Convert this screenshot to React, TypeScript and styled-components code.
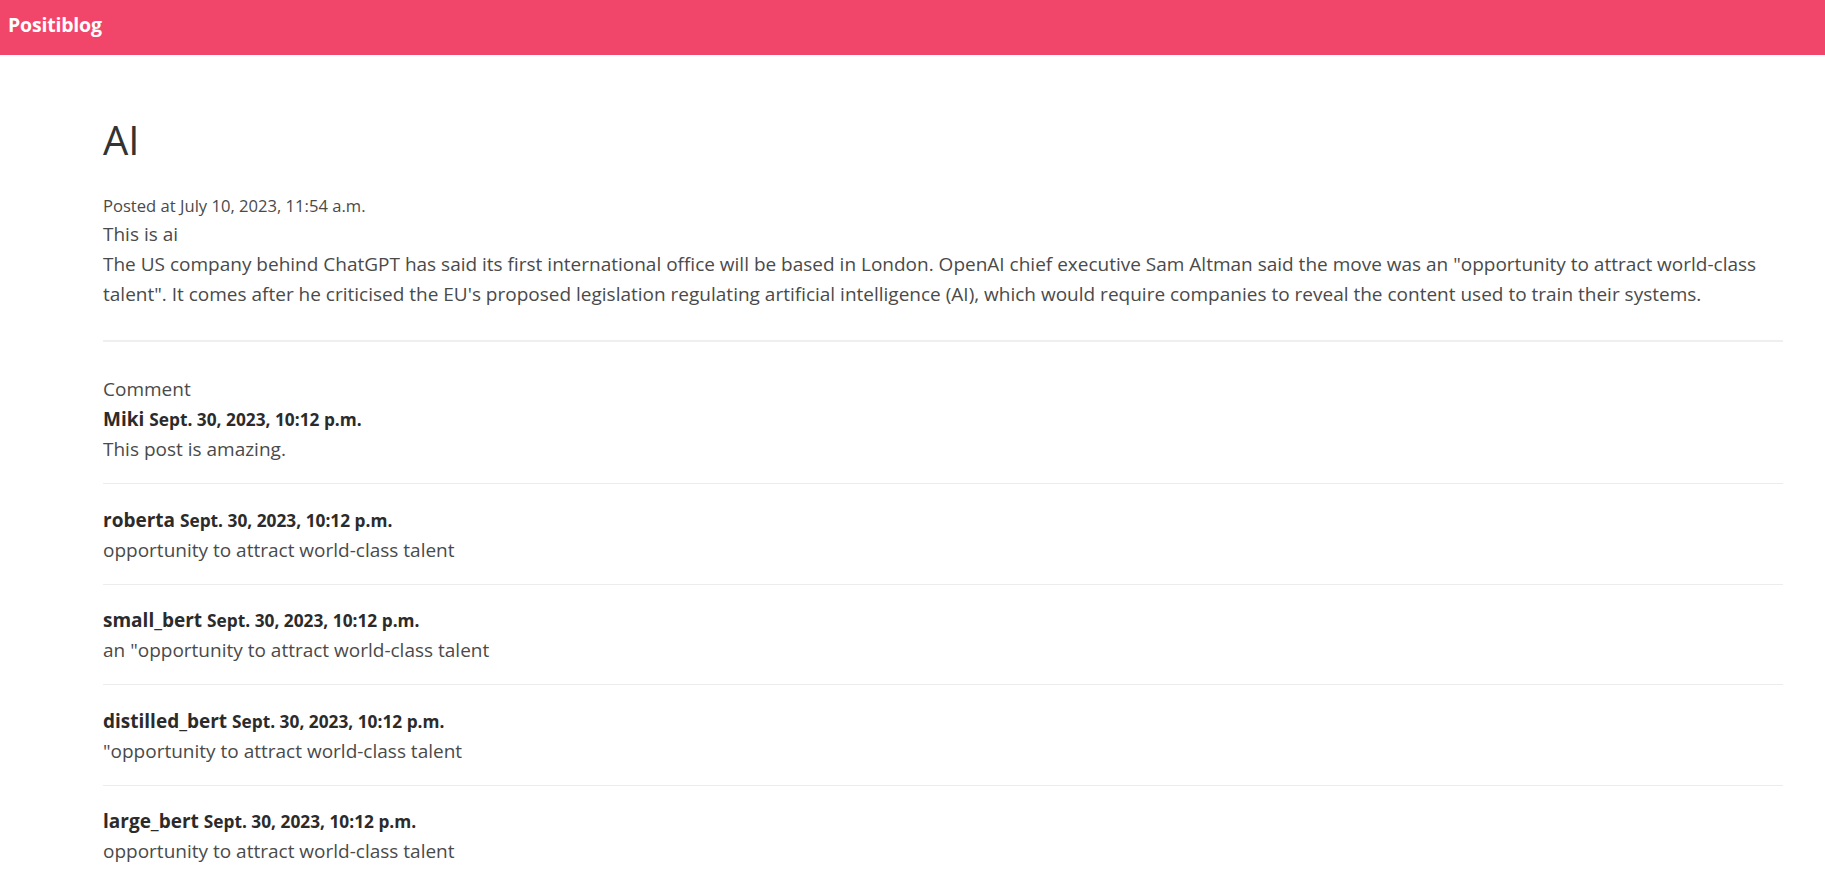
import React from "react";
import styled, { createGlobalStyle } from "styled-components";

const GlobalStyle = createGlobalStyle`
  html, body {
    margin: 0;
    padding: 0;
    background: #ffffff;
  }
  body {
    font-family: "Open Sans", "Noto Sans", "Liberation Sans", sans-serif;
    color: #4a4a4a;
  }
  * { box-sizing: border-box; }
`;

const TopBar = styled.header`
  height: 55px;
  background: #f1466a;
  padding: 10px 8px 0;
  display: flex;
  align-items: flex-start;
`;

const Brand = styled.a`
  color: #ffffff;
  font-weight: 700;
  font-size: 19.5px;
  line-height: 30px;
  text-decoration: none;
  letter-spacing: -0.2px;
`;

const Main = styled.main`
  padding: 0 42px 0 103px;
`;

const Title = styled.h1`
  margin: 61px 0 28px;
  font-size: 40px;
  line-height: 48px;
  font-weight: 500;
  color: #333333;
`;

const Meta = styled.div`
  font-size: 16.6px;
  line-height: 27px;
  color: #4a4a4a;
`;

const Body = styled.div`
  font-size: 19px;
  line-height: 30px;
  color: #4a4a4a;
`;

const Divider = styled.hr`
  margin: 31px 0 32px;
  border: 0;
  border-top: 2px solid #efefef;
  height: 0;
`;

const SectionLabel = styled.div`
  font-size: 19px;
  line-height: 30px;
  color: #4a4a4a;
`;

const CommentItem = styled.div`
  padding-bottom: 19px;
  border-bottom: 1px solid #ececec;
  & + & {
    padding-top: 20.6px;
  }
`;

const CommentHead = styled.div`
  font-size: 19px;
  line-height: 30px;
  height: 30px;
  font-weight: 700;
  color: #2b2b2b;
`;

const CommentDate = styled.span`
  font-size: 17.3px;
  line-height: 20px;
`;

const CommentText = styled.div`
  font-size: 19px;
  line-height: 30px;
  color: #4a4a4a;
`;

const comments = [
  { author: "Miki", text: "This post is amazing." },
  { author: "roberta", text: "opportunity to attract world-class talent" },
  { author: "small_bert", text: 'an "opportunity to attract world-class talent' },
  { author: "distilled_bert", text: '"opportunity to attract world-class talent' },
  { author: "large_bert", text: "opportunity to attract world-class talent" },
];

export default function App() {
  return (
    <>
      <GlobalStyle />
      <TopBar>
        <Brand href="#">Positiblog</Brand>
      </TopBar>
      <Main>
        <Title>AI</Title>
        <Meta>Posted at July 10, 2023, 11:54 a.m.</Meta>
        <Body>This is ai</Body>
        <Body>
          The US company behind ChatGPT has said its first international office will be based in London. OpenAI chief
          executive Sam Altman said the move was an "opportunity to attract world-class talent". It comes after he
          criticised the EU's proposed legislation regulating artificial intelligence (AI), which would require
          companies to reveal the content used to train their systems.
        </Body>
        <Divider />
        <SectionLabel>Comment</SectionLabel>
        {comments.map((c) => (
          <CommentItem key={c.author}>
            <CommentHead>
              {c.author} <CommentDate>Sept. 30, 2023, 10:12 p.m.</CommentDate>
            </CommentHead>
            <CommentText>{c.text}</CommentText>
          </CommentItem>
        ))}
      </Main>
    </>
  );
}
